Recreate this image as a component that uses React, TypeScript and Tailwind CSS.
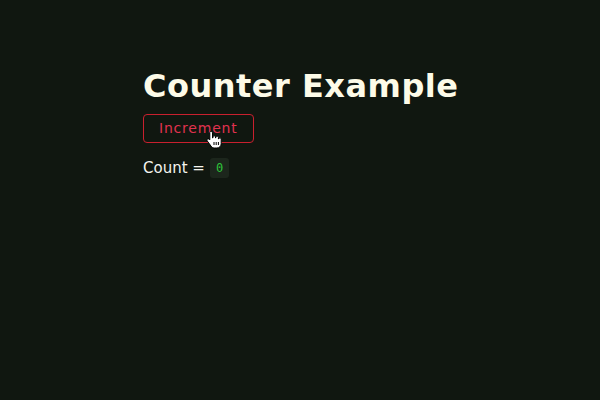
export default function App() {
  return (
    <div className="w-[600px] h-[400px] bg-[#101710] pl-[143px] pt-[66px] font-['DejaVu_Sans',sans-serif]">
      <h1 className="text-[32px] leading-[40px] font-bold text-[#fdfbe8] tracking-[0.5px]">
        Counter Example
      </h1>
      <div className="relative mt-[8px] w-fit">
        <button className="h-[29px] px-[15px] border border-[#c8202e] rounded-[4px] text-[14px] text-[#e0324f] tracking-[0.8px]">
          Increment
        </button>
        {/* hand cursor */}
        <svg
          className="absolute left-[63px] top-[16px]"
          width="17"
          height="19"
          viewBox="0 0 17 19"
        >
          <path
            d="M5 1.5c.8 0 1.5.6 1.5 1.4V8h.4V7c0-.8.6-1.3 1.3-1.3s1.3.5 1.3 1.3v1h.3v-.6c0-.8.6-1.3 1.3-1.3s1.3.5 1.3 1.3V9h.3c0-.7.6-1.2 1.2-1.2s1.3.5 1.3 1.3v4.4c0 2.6-1.7 4.5-4.3 4.5H8.5c-1.6 0-2.6-.7-3.5-1.9L1.3 11c-.5-.7-.3-1.5.3-1.9.6-.4 1.4-.2 1.9.4l.3.4V2.9C3.5 2.1 4.2 1.5 5 1.5z"
            fill="#fff"
            stroke="#000"
            strokeWidth="1"
          />
          <path d="M8 12v3M10.2 12v3M12.4 12v3" stroke="#000" strokeWidth="1" />
        </svg>
      </div>
      <div className="mt-[14px] flex items-center gap-[5px] text-[15px] text-[#f4f4ee]">
        <span>Count =</span>
        <span className="bg-[#1c261c] rounded-[3px] px-[6px] h-[20px] flex items-center font-['DejaVu_Sans_Mono',monospace] text-[12px] text-[#2ec43a]">
          0
        </span>
      </div>
    </div>
  );
}
